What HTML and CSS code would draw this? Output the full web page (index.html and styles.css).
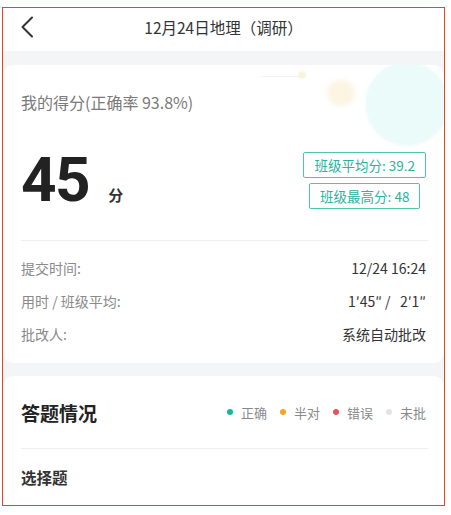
FILE: index.html
```html
<!DOCTYPE html>
<html lang="zh">
<head>
<meta charset="utf-8">
<title>12月24日地理（调研）</title>
<link rel="stylesheet" href="styles.css">
</head>
<body>
<div class="frame">
  <header class="topbar">
    <div class="back">
      <svg width="14" height="22" viewBox="0 0 14 22"><path d="M12 1.5 L2.5 11 L12 20.5" fill="none" stroke="#333" stroke-width="2" stroke-linecap="round" stroke-linejoin="round"/></svg>
    </div>
    <div class="title">12月24日地理（调研）</div>
    <div></div>
  </header>

  <section class="card score-card">
    <div class="decor deco-line"></div>
    <div class="decor deco-dot"></div>
    <div class="decor deco-yellow"></div>
    <div class="decor deco-cyan"></div>

    <div class="score-label">我的得分(正确率 93.8%)</div>
    <div class="score-row">
      <div class="score">
        <span class="score-num">45</span><span class="score-unit">分</span>
      </div>
      <div class="pills">
        <div class="pill">班级平均分: 39.2</div>
        <div class="pill">班级最高分: 48</div>
      </div>
    </div>
    <div class="divider"></div>
    <div class="info">
      <div class="info-row"><span class="k">提交时间:</span><span class="v">12/24 16:24</span></div>
      <div class="info-row"><span class="k">用时 / 班级平均:</span><span class="v">1′45″ /&nbsp;&nbsp; 2′1″</span></div>
      <div class="info-row"><span class="k">批改人:</span><span class="v">系统自动批改</span></div>
    </div>
  </section>

  <section class="card answer-card">
    <div class="answer-head">
      <div class="answer-title">答题情况</div>
      <div class="legend">
        <span class="item"><i class="dot green"></i>正确</span>
        <span class="item"><i class="dot orange"></i>半对</span>
        <span class="item"><i class="dot red"></i>错误</span>
        <span class="item"><i class="dot gray"></i>未批</span>
      </div>
    </div>
    <div class="divider"></div>
    <div class="sub-title">选择题</div>
  </section>
</div>
</body>
</html>
```

FILE: styles.css
```css
* { box-sizing: border-box; margin: 0; padding: 0; }
html, body { background: #fff; }
body {
  font-family: "Noto Sans CJK SC", "Noto Sans", sans-serif;
  color: #333;
}
.frame {
  margin: 7px 0 0 2px;
  width: 443px;
  height: 499px;
  border: 1px solid #e8441f;
  background: #f4f5f6;
  overflow: hidden;
}
.topbar {
  height: 43px;
  background: #fff;
  display: grid;
  grid-template-columns: 1fr auto 1fr;
  align-items: center;
  padding-bottom: 5px;
}
.back { padding-left: 17px; display: flex; align-items: center; }
.title { font-size: 15.5px; color: #333; line-height: 20px; }

.card {
  background: #fff;
  border-radius: 10px;
  padding: 0 18px;
  position: relative;
  overflow: hidden;
}
.score-card { margin-top: 14px; padding-top: 27px; padding-bottom: 13px; }
.decor { position: absolute; border-radius: 50%; }
.deco-cyan { left: 362px; top: -3px; width: 84px; height: 84px; background: #ebfbfa; filter: blur(1px); }
.deco-yellow { left: 324px; top: 15px; width: 28px; height: 26px; background: #fdf5e3; filter: blur(2px); }
.deco-dot { left: 295px; top: 6px; width: 8px; height: 8px; background: #f6f4dc; filter: blur(1px); }
.deco-line { left: 258px; top: 11px; width: 42px; height: 1px; border-radius: 0; background: #f2f2f2; }

.score-label { position: relative; font-size: 16px; line-height: 20px; color: #7a7a7a; }
.score-row {
  position: relative;
  margin-top: 39px;
  display: flex;
  justify-content: space-between;
  align-items: center;
}
.score { display: flex; align-items: baseline; }
.score-num {
  font-family: "Roboto", "Noto Sans", sans-serif;
  font-weight: 700;
  font-size: 62px;
  line-height: 58px;
  color: #222;
  letter-spacing: -1.5px;
}
.score-unit { font-size: 15px; font-weight: 700; color: #333; margin-left: 19px; }
.pills { display: flex; flex-direction: column; align-items: center; gap: 5px; }
.pill {
  border: 1px solid #4fc4b1;
  border-radius: 2px;
  color: #2bb39e;
  font-size: 13.5px;
  line-height: 20px;
  padding: 2px 10px 2px 10px;
}
.divider { height: 1px; background: #efefef; margin-right: -2px; }
.score-card .divider { margin-top: 31px; }
.info { padding-top: 10px; }
.info-row {
  height: 33px;
  display: flex;
  justify-content: space-between;
  align-items: center;
  font-size: 14px;
}
.info-row .k { color: #8a8a8a; }
.info-row .v { color: #333; }

.answer-card { margin-top: 13px; border-radius: 10px 10px 0 0; height: 200px; }
.answer-head {
  height: 72px;
  display: flex;
  justify-content: space-between;
  align-items: center;
}
.answer-title { font-size: 19px; font-weight: 700; color: #222; }
.legend { display: flex; gap: 13px; font-size: 13px; color: #8a8a8a; }
.item { display: flex; align-items: center; }
.dot { width: 6px; height: 6px; border-radius: 50%; margin-right: 8px; display: inline-block; }
.dot.green { background: #16b89b; }
.dot.orange { background: #f2a52a; }
.dot.red { background: #e8545a; }
.dot.gray { background: #e3e3e3; }
.sub-title { font-size: 15.5px; font-weight: 700; color: #333; margin-top: 18px; line-height: 20px; }
```
